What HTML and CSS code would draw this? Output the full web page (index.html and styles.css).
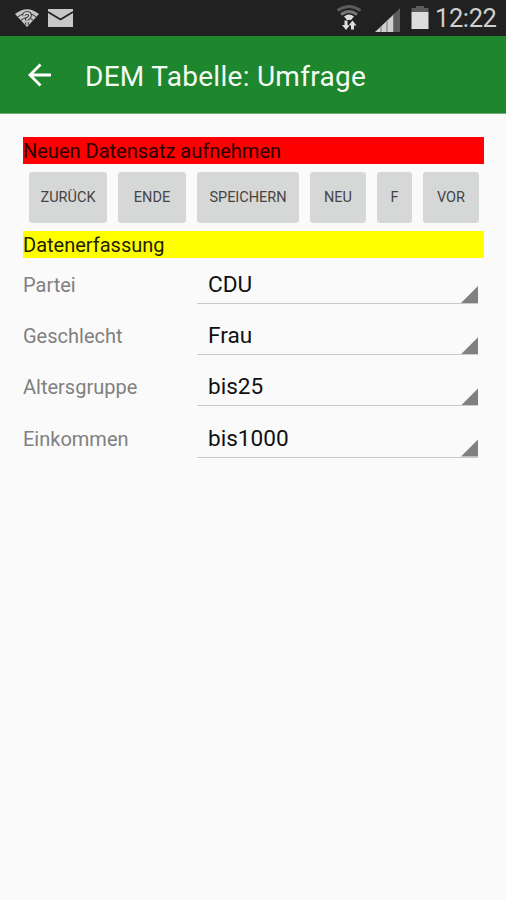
FILE: index.html
```html
<!DOCTYPE html>
<html lang="de">
<head>
    <meta charset="UTF-8">
    <meta name="viewport" content="width=device-width, initial-scale=1.0">
    <title>DEM Tabelle: Umfrage</title>
    <link rel="stylesheet" href="styles.css">
</head>
<body>
    <div class="statusbar">
        <svg class="icon-unknown" width="26" height="20" viewBox="0 0 26 20">
            <path d="M1 6 Q13 -3.500 25 6 L13 19 Z" fill="#c4c4c4"/>
            <path d="M3.500 9 Q13 1.500 22.500 9 M6.500 12.500 Q13 7 19.500 12.500" fill="none" stroke="#333" stroke-width="1"/>
            <path d="M10 7.500 Q10 5 13 5 Q16 5 16 7.500 Q16 9.500 13 11 V12.500 M13 14.500 V16.500" fill="none" stroke="#222" stroke-width="3.600"/>
            <path d="M10 7.500 Q10 5 13 5 Q16 5 16 7.500 Q16 9.500 13 11 V12.500 M13 14.500 V16.500" fill="none" stroke="#ccc" stroke-width="1.800"/>
        </svg>
        <svg class="icon-mail" width="25" height="18" viewBox="0 0 25 18">
            <rect width="25" height="18" fill="#c8c8c8"/>
            <path d="M0 3 L12.500 10.500 L25 3" fill="none" stroke="#222" stroke-width="1.800"/>
        </svg>
        <svg class="icon-wifi" width="26" height="26" viewBox="0 0 26 26">
            <path d="M1.500 5.500 Q13 -2.500 24.500 5.500" fill="none" stroke="#5c5c5c" stroke-width="3"/>
            <path d="M5 9.500 Q13 3.500 21 9.500" fill="none" stroke="#777" stroke-width="3"/>
            <path d="M8 11.500 Q13 7.500 18 11.500 L15 15 H11 Z" fill="#ddd"/>
            <path d="M8.500 15.500 H11.500 V20 H14 L10 25 L6 20 H8.500 Z M15 24.500 H18 V20.500 H20.500 L16.500 15.500 L12.500 20.500 H15 Z" fill="#ddd"/>
        </svg>
        <svg class="icon-signal" width="25" height="24" viewBox="0 0 25 24">
            <path d="M0 24 L18 7 V24 Z" fill="#d0d0d0"/>
            <path d="M18.500 6.500 L25 0 V24 H18.500 Z" fill="#5c5c5c"/>
            <path d="M6 18 V24 M12 12 V24 M18.500 6 V24" stroke="#777" stroke-width="1"/>
        </svg>
        <svg class="icon-battery" width="18" height="23" viewBox="0 0 18 23">
            <path d="M5 0 H13 V2 H17.500 V7 H0.500 V2 H5 Z" fill="#5c5c5c"/>
            <rect x="0.500" y="6" width="17" height="17" fill="#ddd"/>
        </svg>
        <span class="clock">12:22</span>
    </div>

    <header class="toolbar">
        <svg class="back" width="24" height="24" viewBox="0 0 24 24">
            <path d="M12.500 1.500 L2 12 L12.500 22.500 M2 12 H23" fill="none" stroke="#fff" stroke-width="2.800"/>
        </svg>
        <h1>DEM Tabelle: Umfrage</h1>
    </header>

    <main>
        <div class="banner banner-red">Neuen Datensatz aufnehmen</div>
        <div class="buttons">
            <button class="button back-button">Zurück</button>
            <button class="button end-button">Ende</button>
            <button class="button save-button">Speichern</button>
            <button class="button new-button">Neu</button>
            <button class="button f-button">F</button>
            <button class="button next-button">Vor</button>
        </div>
        <div class="banner banner-yellow">Datenerfassung</div>

        <div class="row">
            <span class="label">Partei</span>
            <div class="spinner"><span>CDU</span></div>
        </div>
        <div class="row">
            <span class="label">Geschlecht</span>
            <div class="spinner"><span>Frau</span></div>
        </div>
        <div class="row">
            <span class="label">Altersgruppe</span>
            <div class="spinner"><span>bis25</span></div>
        </div>
        <div class="row">
            <span class="label">Einkommen</span>
            <div class="spinner"><span>bis1000</span></div>
        </div>
    </main>
</body>
</html>
```
FILE: styles.css
```css
* {
    box-sizing: border-box;
}
body {
    margin: 0;
    min-height: 900px;
    background-color: #fafafa;
    font-family: Roboto, sans-serif;
    color: #111;
}
.statusbar {
    display: flex;
    align-items: flex-start;
    height: 36px;
    background-color: #212121;
}
.icon-unknown {
    margin: 8px 0 0 14px;
}
.icon-mail {
    margin: 9px 0 0 8px;
}
.icon-wifi {
    margin: 5px 0 0 263px;
}
.icon-signal {
    margin: 8px 0 0 13px;
}
.icon-battery {
    margin: 6px 0 0 11px;
}
.clock {
    margin-left: 6px;
    font-size: 25.5px;
    letter-spacing: -0.4px;
    line-height: 36px;
    color: #d0d0d0;
}
.toolbar {
    display: flex;
    align-items: center;
    height: 78px;
    padding-left: 28px;
    background-color: #1e862d;
    border-bottom: 1px solid #6fb078;
}
.toolbar h1 {
    margin: 3px 0 0 33px;
    font-size: 28px;
    font-weight: 400;
    letter-spacing: 0.28px;
    color: #f4fbf4;
}
main {
    padding: 23px 22px 0 23px;
}
.banner {
    height: 27px;
    font-size: 20px;
    line-height: 29px;
}
.banner-red {
    background-color: #ff0000;
    color: #2a0000;
}
.banner-yellow {
    background-color: #ffff00;
    color: #222200;
    margin-bottom: 1px;
}
.buttons {
    display: flex;
    gap: 11px;
    padding: 8px 0 8px 6px;
}
.button {
    height: 51px;
    padding: 0;
    border: none;
    border-radius: 3px;
    background-color: #d6d8d7;
    color: #444;
    font-family: inherit;
    font-size: 14.5px;
    text-transform: uppercase;
}
.back-button {
    width: 78px;
}
.end-button {
    width: 68px;
}
.save-button {
    width: 102px;
}
.new-button, .next-button {
    width: 56px;
}
.f-button {
    width: 35px;
}
.row {
    display: flex;
    height: 51.2px;
}
.label {
    width: 174px;
    font-size: 20px;
    line-height: 52px;
    color: #808080;
}
.spinner {
    display: flex;
    justify-content: space-between;
    align-items: flex-end;
    width: 281px;
    height: 45px;
    padding-left: 11px;
    border-bottom: 1px solid #cacaca;
    font-size: 22.6px;
    line-height: 36px;
}
.spinner::after {
    content: "";
    width: 17px;
    height: 17px;
    background-color: #808080;
    clip-path: polygon(100% 0, 100% 100%, 0 100%);
}
```
